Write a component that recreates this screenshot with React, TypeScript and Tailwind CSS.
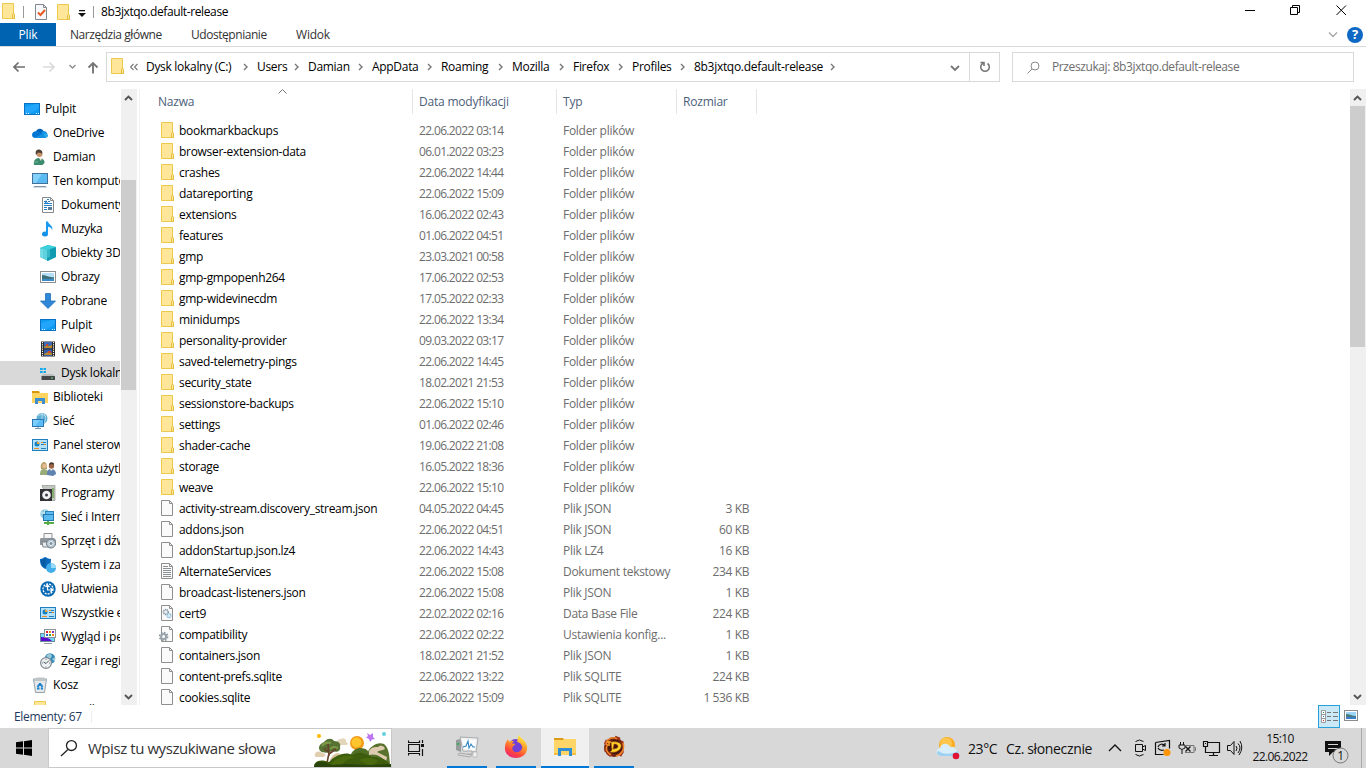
import type { ReactNode } from "react"

interface TreeItem {
  label: string
  level: number
  icon: ReactNode
  selected?: boolean
}

interface FileEntry {
  name: string
  date: string
  type: string
  size?: string
  kind: "folder" | "blank" | "text" | "db" | "config"
}

const Svg = ({ children, size = 16 }: { children: ReactNode; size?: number }) => (
  <svg width={size} height={size} viewBox={`0 0 ${size} ${size}`} fill="none" className="block shrink-0">
    {children}
  </svg>
)

/* ---------- shared icons ---------- */

const FolderIcon = () => (
  <Svg>
    <path d="M2.5 .5h11v11h1v4h-12z" fill="#ffe699" stroke="#ecc94d" />
    <path d="M12.5 15v-3.5q0-1 1-1t1 1v4h-2z" fill="#ffe699" stroke="#e5bd3c" />
  </Svg>
)

const PageIcon = ({ kind }: { kind: FileEntry["kind"] }) => (
  <Svg>
    <path d="M2.5 .5h8l3 3v12h-11z" fill="#fafafa" stroke="#8f8f8f" />
    <path d="M10.5 .5v3h3" stroke="#8f8f8f" />
    {kind === "text" && <path d="M4 3.5h5M4 5.5h8M4 7.5h8M4 9.5h8M4 11.5h8M4 13.5h8" stroke="#8b8f94" />}
    {kind === "db" && (
      <>
        <circle cx="6.8" cy="7" r="2.5" stroke="#8798a3" strokeWidth="1.4" strokeDasharray="1.2 .6" fill="#d7dfe4" />
        <circle cx="6.8" cy="7" r=".8" fill="#fff" />
        <circle cx="10" cy="10.6" r="2" stroke="#86b7d8" strokeWidth="1.3" strokeDasharray="1.1 .5" fill="#d8ecf8" />
      </>
    )}
    {kind === "config" && (
      <>
        <circle cx="4.6" cy="10.5" r="4" stroke="#8b959c" strokeWidth="1.6" strokeDasharray="1.7 1.4" />
        <circle cx="4.6" cy="10.5" r="2.5" stroke="#99a3aa" strokeWidth="2" fill="#fff" />
      </>
    )}
  </Svg>
)

const Desktop = () => (
  <Svg>
    <rect x=".5" y="2.5" width="15" height="11" fill="#0f9bf2" stroke="#0873c4" />
    <path d="M1 13V6L12 3h3v4L5 13z" fill="#2fabff" opacity=".6" />
    <path d="M2 12.5h1M4 12.5h1M12 12.5h1M14 12.5h1" stroke="#d8f0ff" />
  </Svg>
)

const OneDrive = () => (
  <Svg>
    <path d="M4 6.5C5 3.5 8.5 2.8 10.8 5l1.2 1.8L7 11z" fill="#0364b8" />
    <path d="M9.5 7C11 5 15 6 15.3 9L9 12z" fill="#1490df" />
    <path d="M4 6.2C1.7 6.2 0 7.8 0 9.8 0 12 1.5 13 3.5 13L11 9.2 6.6 6.6z" fill="#0078d4" />
    <path d="M3 13h10.2c1.6 0 2.8-1.1 2.8-2.4 0-1.5-1.3-2.3-2.6-2.3z" fill="#28a8ea" />
    <path d="M3 13l8-4.3 3 4.3z" fill="#1490df" />
  </Svg>
)

const UserIcon = () => (
  <Svg>
    <path d="M2 16c-1-5 2-7 5-7s6 2 5.5 5l-2 2z" fill="#3d8b6e" />
    <path d="M7 9l2 3 1-3z" fill="#efe6d8" />
    <circle cx="7.5" cy="5" r="3" fill="#c69069" />
    <path d="M4 6C2.5 1 6-.2 8.5 1c2 .7 2 2.800 1.500 4-1-2-3-1-4-1.500z" fill="#4d4135" />
    <path d="M2 12h4v2H2z" fill="#55a080" />
  </Svg>
)

const Computer = () => (
  <Svg>
    <rect x=".5" y=".5" width="15" height="10" fill="#5cbaf2" stroke="#40729c" />
    <path d="M1 1h9L4 10H1z" fill="#98dcff" opacity=".65" />
    <path d="M2 13.5h12" stroke="#8298aa" />
    <path d="M1 14.5h14" stroke="#cfdae2" />
  </Svg>
)

const DocIcon = () => (
  <Svg>
    <path d="M2.5 .5h8l3 3v12h-11z" fill="#fdfdfd" stroke="#87898b" />
    <path d="M10.5 .5v3h3" stroke="#87898b" />
    <path d="M7 2.5h2M4 4.5h3M8 4.5h2M4 6.5h8M4 8.5h8M4 10.5h3M4 12.5h3" stroke="#2482c5" />
    <rect x="8" y="10" width="4" height="3" fill="#547e99" />
    <path d="M6 3L4.500 7h1l1-2 1 2h1z" fill="#1f7ac1" />
  </Svg>
)

const Music = () => (
  <Svg>
    <ellipse cx="5" cy="13" rx="3" ry="2.5" fill="#1590e3" />
    <path d="M6 .5h2c.3 3 5.5 4 4.2 8.500-.6-2-2.200-3-4.200-3.300V13H6z" fill="#189af0" />
  </Svg>
)

const Cube = () => (
  <Svg>
    <path d="M0 3l8-3 8 2v10l-8 4-8-4z" fill="#31b9c9" />
    <path d="M0 3l7 2v10l-7-3z" fill="#75dce6" />
    <path d="M7 5l9-3v10l-9 4z" fill="#119bb0" />
    <path d="M0 3l8-3 8 2-9 3z" fill="#3cd0dc" />
    <path d="M3 5l7-1v8l-7 2z" fill="#4cc9d8" opacity=".6" />
  </Svg>
)

const Picture = () => (
  <Svg>
    <rect x=".5" y="2.5" width="15" height="11" fill="#fff" stroke="#8b8f92" />
    <rect x="2" y="4" width="12" height="8" fill="#b6def6" />
    <path d="M2 6c4 0 7 3 12 2v4H2z" fill="#3f6f76" />
    <path d="M2 10c5-1 8 1 12-1v3H2z" fill="#388bc6" />
  </Svg>
)

const Download = () => (
  <Svg>
    <path d="M5.5 .5h5V8h5L8 15.500.500 8h5z" fill="#2f87d8" stroke="#2271b9" strokeWidth=".8" />
  </Svg>
)

const Film = () => (
  <Svg>
    <rect x="1" y=".5" width="14" height="15" fill="#2d2d2d" />
    <path d="M2.5 1v14M13.5 1v14" stroke="#fff" strokeDasharray="1.2 1" />
    <rect x="4" y="1" width="8" height="6.5" fill="#3c69ba" />
    <rect x="4" y="8.5" width="8" height="6.5" fill="#345dad" />
    <path d="M4 6l3-2 2 1 3-1v3H4zM4 13l4-2 4 1v2H4z" fill="#b98a2d" />
    <path d="M6 3h2v2H6zM8 10h3v2H8z" fill="#cb4931" />
  </Svg>
)

const Drive = () => (
  <Svg>
    <path d="M0 3h2.7v2H0zM3.5 3H6v2H3.5zM0 6h2.7v2H0zM3.5 6H6v2H3.5z" fill="#10a9ec" />
    <path d="M3.5 9h9L15 11H1z" fill="#b9bdc0" />
    <rect x="1.500" y="11" width="13.500" height="4" rx=".5" fill="#43474a" />
    <rect x="11" y="12.5" width="2" height="1" fill="#70e070" />
  </Svg>
)

const Library = () => (
  <Svg>
    <path d="M0 2h7l1 2H0z" fill="#d9980d" />
    <path d="M0 4h16v10H0z" fill="#ffd45f" />
    <path d="M3 9h10v6h-3v-3H6v3H3z" fill="#3b8ed1" />
  </Svg>
)

const Network = () => (
  <Svg>
    <circle cx="10" cy="5.5" r="5.5" fill="#5caed4" />
    <path d="M6 3c2-2 6-2 8 1M10 0v11M12 1c2 3 2 6 0 9" stroke="#c7e5ef" strokeWidth=".8" />
    <rect x=".5" y="6.5" width="11" height="7" fill="#5abcf7" stroke="#2b76b2" />
    <path d="M1 7h7l-5 6H1z" fill="#8ad7ff" opacity=".7" />
    <path d="M3 15.5h6M6 14v1" stroke="#7394a9" />
  </Svg>
)

const Panel = () => (
  <Svg>
    <rect x=".5" y="2.5" width="15" height="11" fill="#b5e1fa" stroke="#217fc0" />
    <circle cx="5" cy="7" r="2.5" fill="#1481c5" />
    <path d="M5 7V4.5A2.5 2.5 0 0 1 7.5 7z" fill="#f3a52b" />
    <path d="M9 5.5h5M9 7.5h5M9 11.5h5" stroke="#217fc0" />
    <path d="M9 5h2v1H9zM2 11h5v1H2zM12 7h2v1h-2z" fill="#e98b26" />
  </Svg>
)

const Users = () => (
  <Svg>
    <path d="M0 14c0-4 1-6 4-6s5 3 5 5l-2 1z" fill="#98ac78" />
    <path d="M1 8C0 3 2 1 4.500 1 7 2 7 5 7 8z" fill="#b7a168" />
    <circle cx="4.500" cy="5" r="2.200" fill="#e4bc94" />
    <path d="M7 14c0-4 1-6 4-6s5 2 5 5l-3 2z" fill="#5f82b0" />
    <circle cx="11.5" cy="5" r="2.7" fill="#9b6545" />
    <path d="M9 4c0-4 6-3 5 0l-2-1z" fill="#43372e" />
    <path d="M10 8l1 2 2-2z" fill="#f4eee6" />
  </Svg>
)

const Programs = () => (
  <Svg>
    <path d="M2 .5h13v15H8z" fill="#c3c8c0" stroke="#8f968f" strokeWidth=".7" />
    <path d="M12 3h2v10h-2z" fill="#86ad70" />
    <rect x="0" y="4" width="12" height="12" fill="#303236" />
    <circle cx="6.5" cy="10" r="4.3" fill="#f0f1f2" />
    <circle cx="6.5" cy="10" r="1.5" fill="#3a3f44" />
  </Svg>
)

const Internet = () => (
  <Svg>
    <circle cx="5" cy="5" r="4.7" fill="#8ac9dc" />
    <path d="M1 4h8M5 0v8" stroke="#d8eff4" />
    <rect x="5.5" y="2.5" width="8" height="6" fill="#5cbdf3" stroke="#2c86bd" />
    <rect x="3.5" y="5.5" width="10" height="6" fill="#57baf0" stroke="#2577ac" />
    <path d="M4 14h10M8 12v4" stroke="#56ad46" strokeWidth="2" />
  </Svg>
)

const Hardware = () => (
  <Svg>
    <path d="M4 .5h8v5H4z" fill="#f5f5f5" stroke="#8d9297" />
    <path d="M1 5h13l2 2v5H0V6z" fill="#8f969c" />
    <path d="M2 9h8v5H3z" fill="#e9eced" stroke="#7b8389" />
    <circle cx="11" cy="10.5" r="4.5" fill="#bcc9d2" stroke="#697985" />
    <circle cx="11" cy="10.5" r="2" fill="#7d93a3" stroke="#e6eff4" />
  </Svg>
)

const Security = () => (
  <Svg>
    <path d="M0 2c3 0 4-2 5.5-2C7 1 9 2 11 2c0 5-1 8-5.5 10C1 10 0 7 0 2z" fill="#0869bd" />
    <path d="M1 3c2 0 3-1 4.5-2v10C2 9 1 6 1 3z" fill="#075b9f" />
    <circle cx="11" cy="11" r="5" fill="#42aeea" />
    <path d="M11 11V6a5 5 0 0 1 5 5z" fill="#98daf8" />
  </Svg>
)

const Ease = () => (
  <Svg>
    <circle cx="8" cy="8" r="7.7" fill="#0869b3" />
    <circle cx="8" cy="8" r="5" stroke="#fff" strokeWidth="1.3" strokeDasharray="2 1" />
    <path d="M7.5 4v5H12M10.500 7l2 2-2 2M5.5 6l2-2 2 2" stroke="#fff" strokeWidth="1.2" />
  </Svg>
)

const Appearance = () => (
  <Svg>
    <rect x=".5" y="4.5" width="14" height="8" fill="#70dafa" stroke="#6a8a9d" />
    <path d="M1 8c5 0 8 1 11 4H1z" fill="#5b0bce" />
    <rect x="4.5" y=".5" width="11" height="8" fill="#fff" stroke="#8b9298" />
    <path d="M6 2h2v2H6z" fill="#e82525" />
    <path d="M9 2h2v2H9zM12 5h2v2h-2z" fill="#eb8b19" />
    <path d="M12 2h2v2h-2z" fill="#852ec5" />
    <path d="M6 5h2v2H6z" fill="#2365d5" />
    <path d="M9 5h2v2H9z" fill="#2ca344" />
    <path d="M4 14.5h8" stroke="#929da4" />
  </Svg>
)

const Clock = () => (
  <Svg>
    <circle cx="10" cy="5.5" r="5.3" fill="#338abd" />
    <path d="M6 3l4-3 2 3-2 3zM12 6l3-2v5z" fill="#9cc9d7" />
    <circle cx="6" cy="10" r="5.4" fill="#eef1f2" stroke="#828c92" strokeWidth="1.2" />
    <path d="M6 10.500l3-3M6 10.500L3.500 9" stroke="#48545b" />
    <path d="M6 6v1M2 10h1M9 10h1M6 13.500v1" stroke="#7c878d" />
  </Svg>
)

const Bin = () => (
  <Svg>
    <path d="M1.5 2h13l-2 13.5h-9z" fill="#e4e8ea" stroke="#98a3a9" />
    <path d="M2 2l3-1.500h7L14 2v2H2z" fill="#bdc5c9" />
    <path d="M8 6.500l2.500 3.500M8 6.500L5.500 10M5 11.500h2.500M8.800 11.500H11" stroke="#1c83cc" strokeWidth="1.900" />
  </Svg>
)

const tree: TreeItem[] = [
  { label: "Pulpit", level: 0, icon: <Desktop /> },
  { label: "OneDrive", level: 1, icon: <OneDrive /> },
  { label: "Damian", level: 1, icon: <UserIcon /> },
  { label: "Ten komputer", level: 1, icon: <Computer /> },
  { label: "Dokumenty", level: 2, icon: <DocIcon /> },
  { label: "Muzyka", level: 2, icon: <Music /> },
  { label: "Obiekty 3D", level: 2, icon: <Cube /> },
  { label: "Obrazy", level: 2, icon: <Picture /> },
  { label: "Pobrane", level: 2, icon: <Download /> },
  { label: "Pulpit", level: 2, icon: <Desktop /> },
  { label: "Wideo", level: 2, icon: <Film /> },
  { label: "Dysk lokalny (C:)", level: 2, icon: <Drive />, selected: true },
  { label: "Biblioteki", level: 1, icon: <Library /> },
  { label: "Sieć", level: 1, icon: <Network /> },
  { label: "Panel sterowania", level: 1, icon: <Panel /> },
  { label: "Konta użytkowników", level: 2, icon: <Users /> },
  { label: "Programy", level: 2, icon: <Programs /> },
  { label: "Sieć i Internet", level: 2, icon: <Internet /> },
  { label: "Sprzęt i dźwięk", level: 2, icon: <Hardware /> },
  { label: "System i zabezpieczenia", level: 2, icon: <Security /> },
  { label: "Ułatwienia dostępu", level: 2, icon: <Ease /> },
  { label: "Wszystkie elementy", level: 2, icon: <Panel /> },
  { label: "Wygląd i personalizacja", level: 2, icon: <Appearance /> },
  { label: "Zegar i region", level: 2, icon: <Clock /> },
  { label: "Kosz", level: 1, icon: <Bin /> },
  { label: "scenarii", level: 1, icon: <FolderIcon /> },
]

const folder = (name: string, date: string): FileEntry => ({ name, date, type: "Folder plików", kind: "folder" })

const files: FileEntry[] = [
  folder("bookmarkbackups", "22.06.2022 03:14"),
  folder("browser-extension-data", "06.01.2022 03:23"),
  folder("crashes", "22.06.2022 14:44"),
  folder("datareporting", "22.06.2022 15:09"),
  folder("extensions", "16.06.2022 02:43"),
  folder("features", "01.06.2022 04:51"),
  folder("gmp", "23.03.2021 00:58"),
  folder("gmp-gmpopenh264", "17.06.2022 02:53"),
  folder("gmp-widevinecdm", "17.05.2022 02:33"),
  folder("minidumps", "22.06.2022 13:34"),
  folder("personality-provider", "09.03.2022 03:17"),
  folder("saved-telemetry-pings", "22.06.2022 14:45"),
  folder("security_state", "18.02.2021 21:53"),
  folder("sessionstore-backups", "22.06.2022 15:10"),
  folder("settings", "01.06.2022 02:46"),
  folder("shader-cache", "19.06.2022 21:08"),
  folder("storage", "16.05.2022 18:36"),
  folder("weave", "22.06.2022 15:10"),
  { name: "activity-stream.discovery_stream.json", date: "04.05.2022 04:45", type: "Plik JSON", size: "3 KB", kind: "blank" },
  { name: "addons.json", date: "22.06.2022 04:51", type: "Plik JSON", size: "60 KB", kind: "blank" },
  { name: "addonStartup.json.lz4", date: "22.06.2022 14:43", type: "Plik LZ4", size: "16 KB", kind: "blank" },
  { name: "AlternateServices", date: "22.06.2022 15:08", type: "Dokument tekstowy", size: "234 KB", kind: "text" },
  { name: "broadcast-listeners.json", date: "22.06.2022 15:08", type: "Plik JSON", size: "1 KB", kind: "blank" },
  { name: "cert9", date: "22.02.2022 02:16", type: "Data Base File", size: "224 KB", kind: "db" },
  { name: "compatibility", date: "22.06.2022 02:22", type: "Ustawienia konfig...", size: "1 KB", kind: "config" },
  { name: "containers.json", date: "18.02.2021 21:52", type: "Plik JSON", size: "1 KB", kind: "blank" },
  { name: "content-prefs.sqlite", date: "22.06.2022 13:22", type: "Plik SQLITE", size: "224 KB", kind: "blank" },
  { name: "cookies.sqlite", date: "22.06.2022 15:09", type: "Plik SQLITE", size: "1 536 KB", kind: "blank" },
]

// width = label plus the arrow that follows it
const crumbs = [
  { label: "Dysk lokalny (C:)", width: "w-[111px]" },
  { label: "Users", width: "w-[51px]" },
  { label: "Damian", width: "w-[64px]" },
  { label: "AppData", width: "w-[69px]" },
  { label: "Roaming", width: "w-[71px]" },
  { label: "Mozilla", width: "w-[61px]" },
  { label: "Firefox", width: "w-[59px]" },
  { label: "Profiles", width: "w-[62px]" },
  { label: "8b3jxtqo.default-release", width: "w-[150px]" },
]

function TitleBar() {
  return (
    <div className="flex h-[23px] shrink-0 items-center justify-between">
      <div className="flex h-full items-center">
        <div className="mb-px">
          <FolderIcon />
        </div>
        <span className="ml-[7px] h-3 w-px bg-[#999]" />
        <div className="ml-[9px]">
          <Svg>
            <path d="M2.5 .5h8l3 3v12h-11z" fill="#f6f8fb" stroke="#828890" />
            <path d="M10.5 .5v3h3" stroke="#828890" />
            <path d="M5 8.5l2.5 2.5L12 6" stroke="#e85b20" strokeWidth="2" />
          </Svg>
        </div>
        <div className="pl-1.5">
          <FolderIcon />
        </div>
        <svg width="8" height="8" viewBox="0 0 8 8" className="mt-1 ml-[7px]">
          <path d="M1 0h6v1.200H1zM0 3h8L4 7z" fill="#111" />
        </svg>
        <span className="ml-[7px] h-3 w-px bg-[#999]" />
        <span className="ml-[7px] tracking-[-0.38px]">8b3jxtqo.default-release</span>
      </div>
      <div className="flex h-full items-center text-black">
        <svg width="116" height="20" viewBox="0 0 116 20" fill="none" stroke="currentColor" className="mr-2 mb-1">
          <path d="M3 10.5h10" />
          <path d="M48.5 7.5h7v7h-7zM50.5 7.500v-2h7v7h-2" />
          <path d="M94.5 5.500l9.500 9.500M104 5.500L94.500 15" />
        </svg>
      </div>
    </div>
  )
}

function Ribbon() {
  return (
    <div className="flex h-6 shrink-0 items-center border-b border-[#dadbdc] text-[#333]">
      <span className="flex h-full w-14 items-center justify-center bg-[#0063b1] text-white">Plik</span>
      <span className="ml-3.5 w-[121px] tracking-[-0.45px]">Narzędzia główne</span>
      <span className="w-[105px] tracking-[-0.45px]">Udostępnianie</span>
      <span>Widok</span>
      <svg width="10" height="6" viewBox="0 0 10 6" className="mr-[9px] ml-auto" fill="none" stroke="#a5a5a5" strokeWidth="1.3">
        <path d="M1 .5l4 4 4-4" />
      </svg>
      <span className="mr-[3px] flex size-4 items-center justify-center rounded-full bg-[#0f69c4] text-[13px] font-bold text-white">?</span>
    </div>
  )
}

function AddressBar() {
  return (
    <div className="flex h-[42px] shrink-0 items-start pt-[5px] pr-3">
      <svg width="106" height="30" viewBox="0 0 106 30" fill="none" className="shrink-0">
        <path d="M25 15H14M18.5 10.5L14 15l4.5 4.5" stroke="#6f6f6f" strokeWidth="1.7" />
        <path d="M43 15h11M49.5 10.5L54 15l-4.5 4.5" stroke="#dadada" strokeWidth="1.7" />
        <path d="M69.5 13l3 3 3-3" stroke="#8c8c8c" strokeWidth="1.4" />
        <path d="M93 21.500V11M88.5 15.500L93 11l4.500 4.500" stroke="#777" strokeWidth="1.9" />
      </svg>
      <div className="flex h-[30px] w-[894px] items-center border border-[#d9d9d9]">
        <div className="mb-0.5 ml-0.5">
          <FolderIcon />
        </div>
        <svg width="8" height="8" viewBox="0 0 8 8" className="mr-2 ml-[5px]" fill="none" stroke="#777" strokeWidth="1.1">
          <path d="M3.5 1l-3 3 3 3M7.500 1l-3 3 3 3" />
        </svg>
        {crumbs.map((crumb) => (
          <span key={crumb.label} className={`${crumb.width} flex shrink-0 items-center justify-between whitespace-nowrap tracking-[-0.3px]`}>
            {crumb.label}
            <svg width="5" height="8" viewBox="0 0 5 8" className="mr-[9px]" fill="none" stroke="#777" strokeWidth="1.4">
              <path d="M1 1l3 3-3 3" />
            </svg>
          </span>
        ))}
        <svg width="10" height="7" viewBox="0 0 10 7" className="mt-0.5 mr-[9px] ml-auto" fill="none" stroke="#777" strokeWidth="1.9">
          <path d="M1 1l4 4 4-4" />
        </svg>
        <span className="flex h-full w-[30px] items-center justify-center border-l border-[#d9d9d9]">
          <svg width="12" height="12" viewBox="0 0 12 12" fill="none" stroke="#777" strokeWidth="1.6">
            <path d="M4 2.2A4.3 4.3 0 1 0 8.500 2.500M1.500 1.500h3.500V5" />
          </svg>
        </span>
      </div>
      <div className="ml-3 flex h-[30px] w-[342px] items-center border border-[#d9d9d9] text-[#6d6d6d]">
        <svg width="13" height="13" viewBox="0 0 13 13" fill="none" stroke="#8a8a8a" className="ml-3.5">
          <circle cx="8" cy="5" r="4" />
          <path d="M5 8L.5 12.500" />
        </svg>
        <span className="ml-3 tracking-[-0.4px]">Przeszukaj: 8b3jxtqo.default-release</span>
      </div>
    </div>
  )
}

function ScrollArrow({ down = false }: { down?: boolean }) {
  return (
    <span className="flex h-[17px] w-[15px] shrink-0 items-center justify-center">
      <svg width="9" height="6" viewBox="0 0 9 6" fill="none" stroke="#555" strokeWidth="1.9">
        <path d={down ? "M1 1l3.500 3.500L8 1" : "M1 5l3.500-3.500L8 5"} />
      </svg>
    </span>
  )
}

function Sidebar() {
  return (
    <div className="flex w-[140px] shrink-0 border-r border-[#f3f3f3]">
      <div className="w-[120px] overflow-hidden pt-2">
        {tree.map((item, i) => (
          <div
            key={i}
            className={`flex h-6 items-center gap-[5px] whitespace-nowrap ${item.selected ? "bg-[#d9d9d9]" : ""} ${
              item.level === 0 ? "pl-6" : item.level === 1 ? "pl-8" : "pl-10"
            }`}
          >
            {item.icon}
            <span>{item.label}</span>
          </div>
        ))}
      </div>
      <div className="ml-px flex w-4 flex-col bg-[#f0f0f0]">
        <ScrollArrow />
        <div className="mt-[74px] h-[210px] w-[15px] bg-[#cdcdcd]" />
        <div className="mt-auto">
          <ScrollArrow down />
        </div>
      </div>
    </div>
  )
}

function FileList() {
  return (
    <div className="flex min-w-0 flex-1">
      <div className="flex flex-1 flex-col overflow-hidden">
        <div className="relative flex h-[25px] shrink-0 items-center pl-[18px] text-[#4c607a]">
          <svg width="9" height="6" viewBox="0 0 9 6" fill="none" stroke="#777" className="absolute top-0 left-[138px]">
            <path d="M.5 4.5l4-4 4 4" />
          </svg>
          <span className="flex h-full w-[255px] items-center border-r border-[#e5e5e5]">Nazwa</span>
          <span className="flex h-full w-36 items-center border-r border-[#e5e5e5] pl-1.5">Data modyfikacji</span>
          <span className="flex h-full w-[120px] items-center border-r border-[#e5e5e5] pl-1.5">Typ</span>
          <span className="flex h-full w-20 items-center border-r border-[#e5e5e5] pl-1.5">Rozmiar</span>
        </div>
        <div className="pt-1.5 pl-[19px]">
          {files.map((file) => (
            <div key={file.name} className="flex h-[21px] items-center whitespace-nowrap text-[#6d6d6d]">
              <div className="mb-px">{file.kind === "folder" ? <FolderIcon /> : <PageIcon kind={file.kind} />}</div>
              <span className="ml-1 w-60 tracking-[-0.3px] text-black">{file.name}</span>
              <span className="w-36 tracking-[-0.65px]">{file.date}</span>
              <span className="w-[116px] tracking-[-0.28px]">{file.type}</span>
              <span className="w-[70px] text-right tracking-[-0.4px]">{file.size}</span>
            </div>
          ))}
        </div>
      </div>
      <div className="flex w-4 flex-col bg-[#f0f0f0]">
        <ScrollArrow />
        <div className="h-[241px] w-[15px] bg-[#cdcdcd]" />
        <div className="mt-auto">
          <ScrollArrow down />
        </div>
      </div>
    </div>
  )
}

function StatusBar() {
  return (
    <div className="flex h-[23px] shrink-0 items-center text-[#1e395b]">
      <span className="ml-3.5 w-[68px] tracking-[-0.35px]">Elementy: 67</span>
      <span className="ml-[9px] h-3 w-px bg-[#eee]" />
      <span className="ml-auto flex h-[23px] w-[22px] items-center justify-center border border-[#26a0da] bg-[#cbe8f6]">
        <svg width="17" height="13" viewBox="0 0 17 13" fill="none">
          <path d="M.5 .5h4v12h-4zM.5 4.5h4M.5 8.5h4" fill="#fff" stroke="#9a9a9a" />
          <path d="M6 2.5h4M12 2.5h5M6 6.5h4M12 6.5h5M6 10.5h4M12 10.5h5" stroke="#777" />
          <path d="M2 2h1v1H2z" fill="#218a4c" />
          <path d="M2 6h1v1H2z" fill="#1b78d0" />
          <path d="M2 10h1v1H2z" fill="#d02f1b" />
        </svg>
      </span>
      <svg width="14" height="11" viewBox="0 0 14 11" className="mr-2 mb-0.5 ml-1">
        <rect x=".5" y=".5" width="13" height="10" fill="#fff" stroke="#8c8c8c" />
        <rect x="2" y="2" width="10" height="7" fill="#9ed5fa" />
        <path d="M2 4c4 0 6 2 10 2v3H2z" fill="#4d7d7b" />
        <path d="M2 7h10v2H2z" fill="#397dcb" />
      </svg>
    </div>
  )
}

const SearchScene = () => (
  <svg width="77" height="38" viewBox="0 0 77 38" fill="none" className="shrink-0">
    <circle cx="5" cy="7" r="2" fill="#ffb900" />
    <circle cx="70" cy="5" r="2" fill="#62d1e2" />
    <path d="M53 4l3 2 3-2v4l2 2-3 .5-2 2.500-1-3-3-1.500 2-1.500z" fill="#bd76ef" />
    <path d="M23 13c0-3 3-3 4-3 3-2 6 1 5 3 3 1 2 3 0 3h-8c-2 0-3-2-1-3z" fill="#e3d5b9" />
    <circle cx="43" cy="14" r="7" fill="#f29a17" />
    <circle cx="42.5" cy="13.5" r="5" fill="#ffc52d" />
    <path d="M1 25c1-3 5-3 7-1 4 0 5 3 1 4H3c-2 0-3-2-2-3z" fill="#e0cfae" />
    <path d="M5 19c0-4 4-5 6-7 3-3 7-3 9 0 5 0 7 3 6 6 1 4-3 6-8 4-5 3-13 2-13-3z" fill="#557233" />
    <path d="M8 17c2-3 5-4 9-3M16 20c3-3 5-2 8-1" stroke="#7e9848" strokeWidth="2" />
    <path d="M13 34l2-10-5-5M15 25l7-5M15 27l-1-12" stroke="#674129" strokeWidth="1.6" />
    <path d="M16 31c2-5 5-6 7-7 4 0 5 3 4 7z" fill="#d9c6a0" />
    <path d="M37 25c4-7 11-7 16-4l5 6-7 5-14-2z" fill="#506f24" />
    <path d="M54 27c-1-7 3-9 8-12 7-2 11 0 13 10l1 10H57z" fill="#59732e" />
    <path d="M55 22c2-4 6-4 9-4 2-2 6-2 7 2-3 2-6 1-8 3l10 5-1 5c-4-5-10-9-17-7z" fill="#dfccb0" />
    <path d="M0 38c0-7 8-8 15-5 6-7 16-11 24-7 6-5 15 0 19 2 8 0 16 2 19 10z" fill="#3d5c0c" />
    <path d="M17 35c8-9 18-10 24-6-8 0-13 6-15 9zM45 31c9-4 15-2 19 1l-6 6z" fill="#4b6a0e" />
    <path d="M0 38c0-6 9-7 17-2l15-1 20 1 25-1v3z" fill="#29450b" />
  </svg>
)

const TaskButton = ({ children, active = false }: { children: ReactNode; active?: boolean }) => (
  <div className={`flex h-10 w-12 shrink-0 flex-col items-center ${active ? "bg-[#f0f0f0]" : ""}`}>
    <span className="flex h-[38px] items-center">{children}</span>
    <span className={`h-0.5 bg-[#0078d7] ${active ? "w-12" : "w-10"}`} />
  </div>
)

function Tray() {
  return (
    <div className="ml-auto flex h-full items-center">
      <svg width="26" height="24" viewBox="0 0 26 24" className="shrink-0">
        <circle cx="11" cy="9" r="8" fill="#faad20" />
        <circle cx="10" cy="7.5" r="6" fill="#ffc54d" />
        <path d="M6 20c-7 0-7-7-2-8 1-5 8-6 10-1 4-1 5 1 6 3 4 1 3 6-1 6z" fill="#d8eefb" />
        <path d="M6 20c-5 0-6-4-4-5 4 3 13 4 20 0 1 2 0 5-3 5z" fill="#9dd0f1" />
        <circle cx="20" cy="20" r="3.3" fill="#e01235" />
      </svg>
      <span className="mt-0.5 ml-1.5 w-[38px] text-[14px] tracking-[-0.4px]">23°C</span>
      <span className="mt-0.5 w-[102px] text-[14px] tracking-[-0.35px] whitespace-nowrap">Cz. słonecznie</span>
      <svg width="136" height="24" viewBox="0 0 136 24" fill="none" stroke="#111" className="shrink-0">
        <path d="M1 15l6-6 6 6" strokeWidth="1.3" />
        {/* meet now */}
        <path d="M27.5 8.5h7v7h-7zM34.500 11l3-1.500v5l-3-1.500M27.500 5.500q4-3 8 0M27.500 18.500q4 3 8 0" />
        {/* update */}
        <path d="M47.5 6.500l14-2v8M47.500 6.500v12h8M50 11c1-3 5-4 7-1M57 7v3h-3M56 14c-3 1-5 0-6-2" strokeWidth="1.2" />
        <circle cx="59" cy="16.500" r="3.5" fill="#ff9500" stroke="none" />
        {/* power */}
        <path d="M72.5 6v3M75.500 6v3M71 9h6v3q-3 3-6 0zM74 14v4" />
        <path d="M77 9.500h9v7h-9M86.500 11.500h1v3h-1" stroke="#777" />
        <path d="M77.500 10.500l5 5M82.500 10.500l-5 5" strokeWidth="1.3" />
        {/* ethernet */}
        <path d="M99.500 6.500h12v10h-14v-6M105.500 16v4M101 19.500h9M95.500 5.500h4v5h-4zM97 7.500h1" strokeWidth="1.2" />
        {/* volume */}
        <path d="M119.500 9.500h3l3.500-4v13l-3.500-4h-3zM128 10q2 2 0 5M130 7.500q4 4 0 9.500M132 5q4 7-1 14" />
      </svg>
      <div className="ml-[3px] flex w-[66px] flex-col items-center text-[12px] leading-[18px] tracking-[-0.6px]">
        <span>15:10</span>
        <span>22.06.2022</span>
      </div>
      <svg width="26" height="28" viewBox="0 0 26 28" className="mt-2 ml-[11px] shrink-0">
        <path d="M1 3h16v11H9l-4 4v-4H1z" fill="#111" />
        <path d="M4 6.500h10M4 10.500h10" stroke="#d8d8d8" />
        <circle cx="16.5" cy="17.500" r="7.5" fill="#d8d8d8" stroke="#777" />
        <text x="16.5" y="22" textAnchor="middle" fontSize="12" fill="#111">
          1
        </text>
      </svg>
      <span className="ml-[11px] h-full w-px bg-[#aaa]" />
      <span className="w-1" />
    </div>
  )
}

function Taskbar() {
  return (
    <div className="flex h-10 shrink-0 items-center bg-[#d8d8d8] text-[#111]">
      <span className="flex w-12 shrink-0 justify-center">
        <Svg>
          <path d="M0 2.3l7-1V7.500H0zM8 1.200L16 0v7.500H8zM0 8.500h7v6.200l-7-1zM8 8.500h8V16l-8-1.200z" fill="#000" />
        </Svg>
      </span>
      <div className="flex h-10 w-[344px] shrink-0 items-center border border-[#c9c9c9] bg-white">
        <svg width="18" height="18" viewBox="0 0 18 18" fill="none" stroke="#222" strokeWidth="1.3" className="ml-[11px]">
          <circle cx="11.5" cy="6.5" r="5" />
          <path d="M8 10.500L1 17" />
        </svg>
        <span className="ml-2.5 w-[227px] text-[15px] tracking-[-0.43px] whitespace-nowrap text-[#333]">Wpisz tu wyszukiwane słowa</span>
        <SearchScene />
      </div>
      <svg width="17" height="16" viewBox="0 0 17 16" fill="none" stroke="#111" strokeWidth="1.2" className="mr-[15px] ml-4 shrink-0">
        <path d="M.5 .5v2h11v-2M.5 15.500v-2h11v2M.5 4.500h11v7H.5zM14.500 0v3M14.500 9v7" />
        <path d="M13 4h3v3h-3z" fill="#111" stroke="none" />
      </svg>
      <div className="ml-[3px] flex">
        <TaskButton>
          <Svg size={24}>
            <path d="M1 5l5-1v13l-5-2z" fill="#969b9b" />
            <path d="M2 8h2v2H2z" fill="#37ad4a" />
            <path d="M5 2l18 1-2 14-13-1z" fill="#efefed" stroke="#a7acae" />
            <path d="M7 4l14 1-1 10-11-1z" fill="#f9fdff" />
            <path d="M8 12l3-1 2-5 1 7 2-4 2 3h2" stroke="#3186c1" strokeWidth="1.1" />
            <path d="M12 16h5v3h-5M4 18l13 2-2 2-12-2z" fill="#dadcdb" stroke="#aaa" />
            <path d="M18 17h4v5h-4z" fill="#f0f0ef" stroke="#aaa" strokeWidth=".6" />
          </Svg>
        </TaskButton>
        <div className="w-px" />
        <TaskButton>
          <Svg size={24}>
            <defs>
              <linearGradient id="fox" x1="18" y1="1" x2="7" y2="23" gradientUnits="userSpaceOnUse">
                <stop stopColor="#fff04a" />
                <stop offset=".4" stopColor="#ff9a28" />
                <stop offset=".75" stopColor="#ff453d" />
                <stop offset="1" stopColor="#e9247d" />
              </linearGradient>
            </defs>
            <circle cx="12" cy="12" r="8" fill="#7340d7" />
            <path d="M15 0c1 3 7 5 8 11 1 7-4 12-11 12C5 23 0 18 1 12c0-3 1-5 3-8l1 3c2-2 4-1 5-1-1 1-2 2-2 3 2-1 3 0 3 1-3 1-4 5 0 7 4 1 8-2 7-6-1-3-4-4-5-4 1-2 0-4 2-7z" fill="url(#fox)" />
          </Svg>
        </TaskButton>
        <div className="w-px" />
        <TaskButton active>
          <svg width="22" height="20" viewBox="0 0 22 20">
            <path d="M0 1h9l2 3H0z" fill="#dc9b17" />
            <path d="M0 3h9l1-1h12v16H0z" fill="#ffd568" />
            <path d="M4 11h14v8h-3v-5H7v5H4z" fill="#2f8ed4" />
            <path d="M0 16h4v2H0zM18 16h4v2h-4z" fill="#f0be45" />
          </svg>
        </TaskButton>
        <div className="w-px" />
        <TaskButton>
          <Svg size={24}>
            <circle cx="12" cy="12" r="10" fill="#732511" />
            <path d="M3 9l2-4M4 17l-1-4M9 21l-4-3M20 6l1 5M13 2l5 2M18 21l3-5" stroke="#9a321a" strokeWidth="2.5" />
            <path d="M4 10c0-6 7-9 11-6M21 8c2 7-2 12-7 13M9 20C4 17 3 13 6 9" stroke="#ef842b" strokeWidth="1.5" />
            <circle cx="13" cy="12" r="7.2" fill="#421710" />
            <path d="M9 7c8-1 11 2 10 5-1 4-6 6-11 5l2-2zM12 9l-1 5c3 0 5-1 5-2.500 0-2-2-2.500-4-2.500z" fill="#ffd629" stroke="#b75210" strokeWidth=".6" fillRule="evenodd" />
            <path d="M5 7h4M7 6v5" stroke="#f5a02a" strokeWidth="1.6" />
          </Svg>
        </TaskButton>
      </div>
      <Tray />
    </div>
  )
}

export default function App() {
  return (
    <div className="flex h-[768px] w-[1366px] flex-col overflow-hidden bg-white font-['Open_Sans','Noto_Sans',sans-serif] text-xs tracking-[-0.2px] text-black">
      <TitleBar />
      <Ribbon />
      <AddressBar />
      <div className="flex h-[616px] shrink-0">
        <Sidebar />
        <FileList />
      </div>
      <StatusBar />
      <Taskbar />
    </div>
  )
}
